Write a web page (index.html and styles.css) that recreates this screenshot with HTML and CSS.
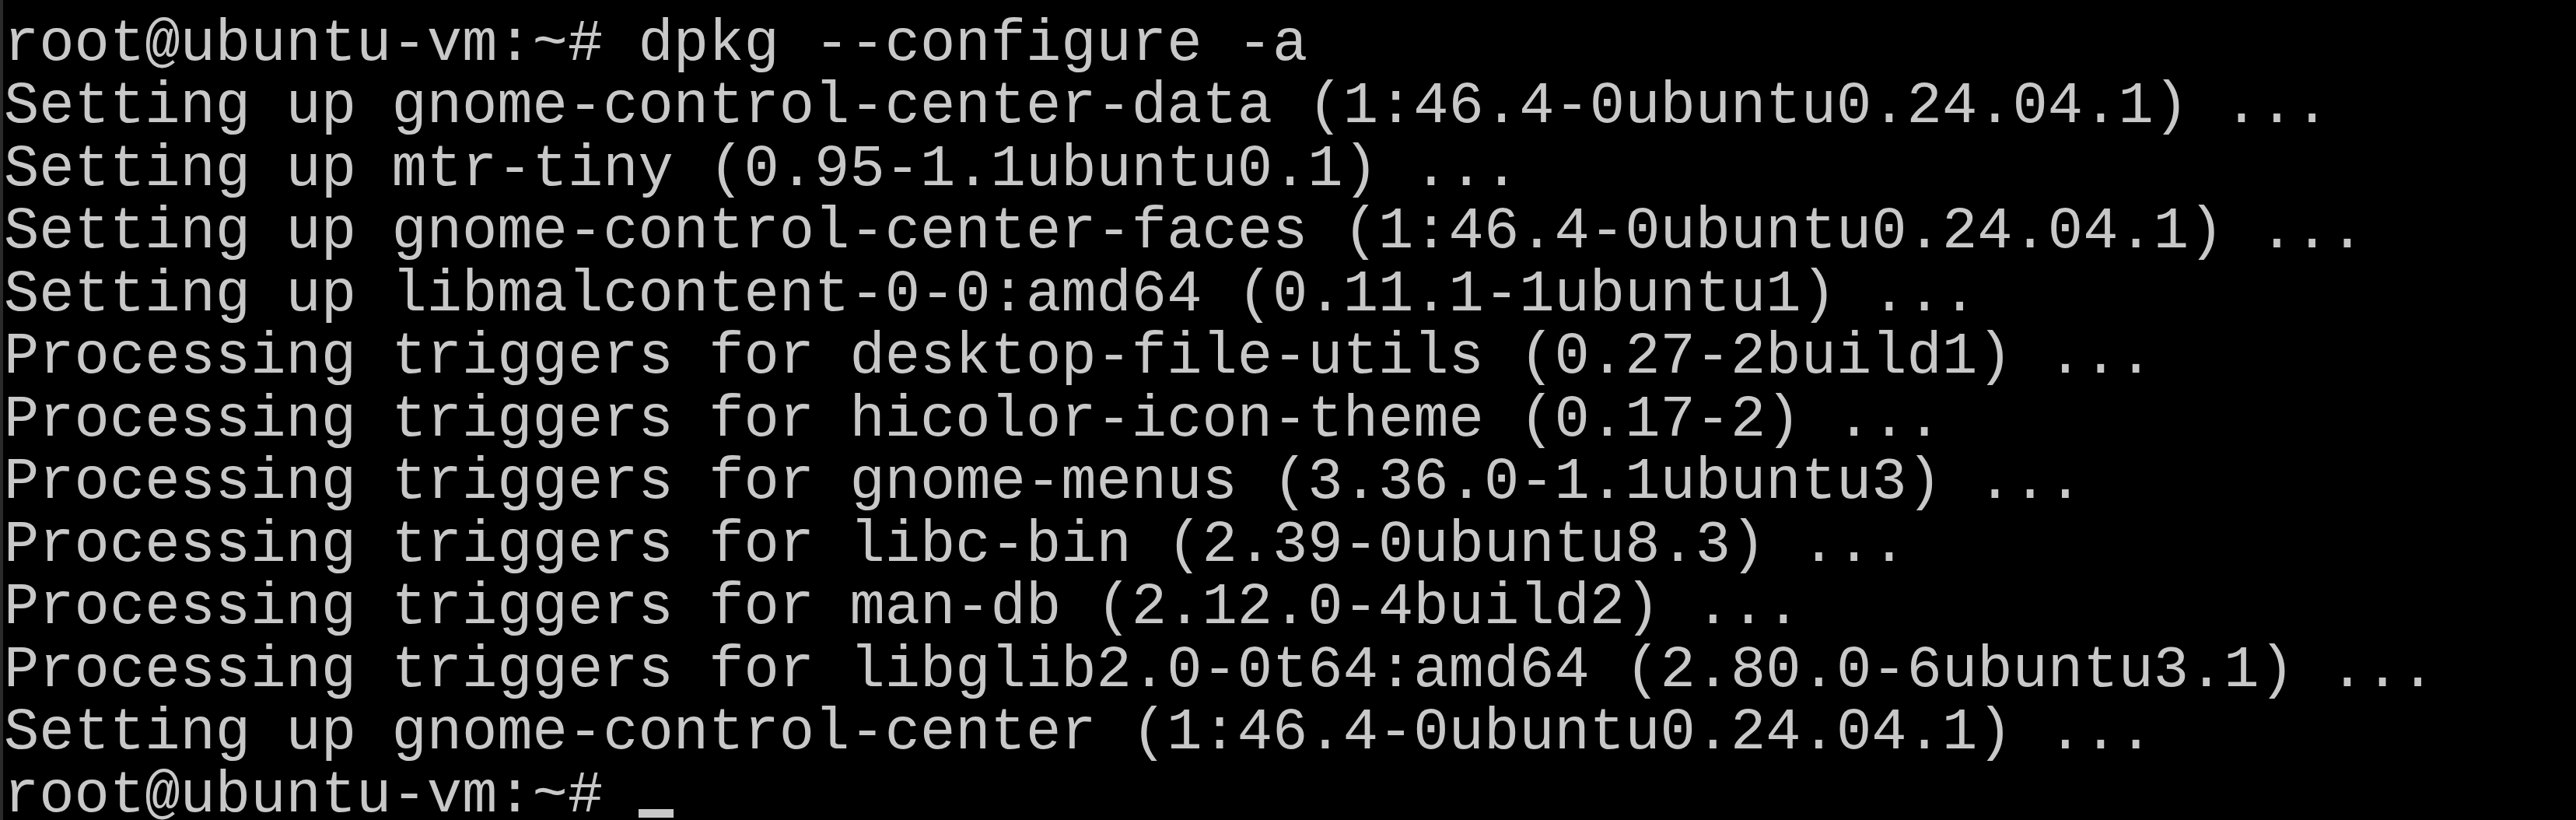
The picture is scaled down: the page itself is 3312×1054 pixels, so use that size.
FILE: index.html
```html
<!DOCTYPE html>
<html lang="en">
<head>
<meta charset="utf-8">
<title>Console</title>
<link rel="stylesheet" href="styles.css">
</head>
<body>
<main class="terminal">
<div class="line">root@ubuntu-vm:~# dpkg --configure -a</div>
<div class="line">Setting up gnome-control-center-data (1:46.4-0ubuntu0.24.04.1) ...</div>
<div class="line">Setting up mtr-tiny (0.95-1.1ubuntu0.1) ...</div>
<div class="line">Setting up gnome-control-center-faces (1:46.4-0ubuntu0.24.04.1) ...</div>
<div class="line">Setting up libmalcontent-0-0:amd64 (0.11.1-1ubuntu1) ...</div>
<div class="line">Processing triggers for desktop-file-utils (0.27-2build1) ...</div>
<div class="line">Processing triggers for hicolor-icon-theme (0.17-2) ...</div>
<div class="line">Processing triggers for gnome-menus (3.36.0-1.1ubuntu3) ...</div>
<div class="line">Processing triggers for libc-bin (2.39-0ubuntu8.3) ...</div>
<div class="line">Processing triggers for man-db (2.12.0-4build2) ...</div>
<div class="line">Processing triggers for libglib2.0-0t64:amd64 (2.80.0-6ubuntu3.1) ...</div>
<div class="line">Setting up gnome-control-center (1:46.4-0ubuntu0.24.04.1) ...</div>
<div class="line">root@ubuntu-vm:~# <span class="cursor"></span></div>
</main>
</body>
</html>
```
FILE: styles.css
```css
html, body {
  margin: 0;
  padding: 0;
  background: #000000;
  height: 100%;
  overflow: hidden;
}

.terminal {
  box-sizing: border-box;
  height: 1054px;
  border-left: 4px solid #2a2a2a;
  padding: 16.6px 0 0 1px;
  background: #000000;
  color: #c8c8c8;
  font-family: "Liberation Mono", "DejaVu Sans Mono", monospace;
  font-size: 75.5px;
  line-height: 80.5px;
}

.line {
  white-space: pre;
  height: 80.5px;
}

.cursor {
  display: inline-block;
  width: 45px;
  height: 11px;
  background: #c8c8c8;
  vertical-align: -8px;
}
```
